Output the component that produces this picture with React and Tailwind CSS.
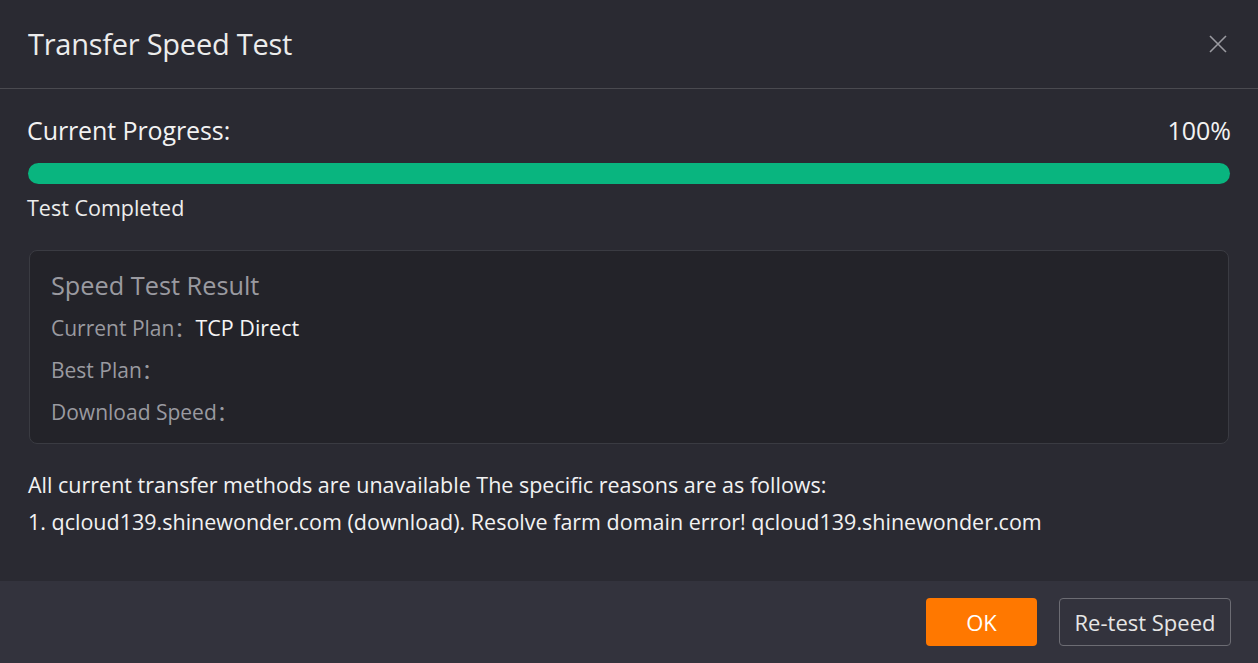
import React from "react";

export default function App() {
  const font = { fontFamily: '"Open Sans", "Noto Sans CJK SC", sans-serif' };
  return (
    <div style={font} className="w-[1258px] h-[663px] flex flex-col bg-[#2a2a32] text-white overflow-hidden">
      <div className="h-[89px] shrink-0 flex items-center justify-between pl-[28px] pr-[31px] border-b border-[#4a4a50]">
        <div className="text-[29px] text-[#ececec] tracking-[-0.25px] leading-[40px]">Transfer Speed Test</div>
        <svg width="18" height="18" viewBox="0 0 18 18" className="text-[#9a9aa0]">
          <path d="M1 1 L17 17 M17 1 L1 17" stroke="currentColor" strokeWidth="1.6" fill="none" />
        </svg>
      </div>
      <div className="flex-1 flex flex-col px-[27px] pt-[26px]">
        <div className="flex justify-between items-center h-[32px]">
          <span className="text-[25px] text-[#f2f2f2] tracking-[-0.1px]">Current Progress:</span>
          <span className="text-[25px] text-[#f2f2f2]">100%</span>
        </div>
        <div className="mt-[16px] h-[21px] rounded-full bg-[#09b57f] mx-[1px]" />
        <div className="mt-[10px] text-[21.5px] text-[#ededed] leading-[28px]">Test Completed</div>
        <div className="mt-[28px] mx-[2px] h-[194px] rounded-[8px] border border-[#3a3b42] bg-[#232329] px-[21px] pt-[17px]">
          <div className="text-[25.3px] text-[#9a9aa0] leading-[34px]">Speed Test Result</div>
          <div className="mt-[11px] flex flex-col gap-[12px] text-[21px] leading-[30px]">
            <div>
              <span className="text-[#9a9aa0]">Current Plan：</span>
              <span className="text-[#f5f5f5] text-[21.5px]">TCP Direct</span>
            </div>
            <div className="text-[#9a9aa0]">Best Plan：</div>
            <div className="text-[#9a9aa0]">Download Speed：</div>
          </div>
        </div>
        <div className="mt-[26px] flex flex-col gap-[7px] text-[21.5px] leading-[30px] text-[#f2f2f2] px-[1px]">
          <div>All current transfer methods are unavailable The specific reasons are as follows:</div>
          <div>1. qcloud139.shinewonder.com (download). Resolve farm domain error! qcloud139.shinewonder.com</div>
        </div>
      </div>
      <div className="h-[82px] shrink-0 bg-[#33333d] flex items-center justify-end gap-[22px] pr-[27px]">
        <button className="w-[111px] h-[48px] rounded-[4px] bg-[#ff7800] text-[22px] text-white">OK</button>
        <button className="w-[172px] h-[48px] rounded-[4px] border-[1.5px] border-[#6c6c73] text-[22px] text-[#e6e6e6]">Re-test Speed</button>
      </div>
    </div>
  );
}
